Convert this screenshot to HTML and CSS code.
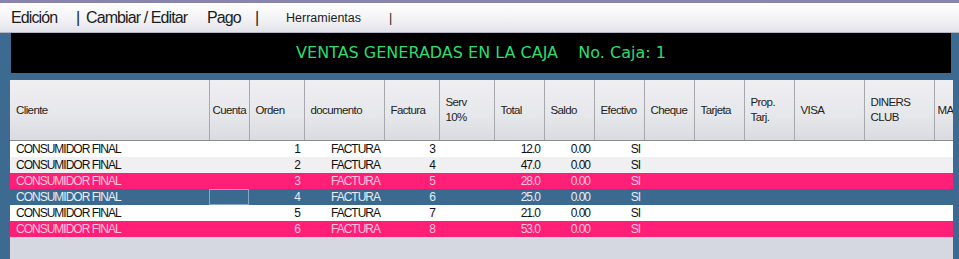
FILE: index.html
```html
<!DOCTYPE html>
<html lang="es">
<head>
    <meta charset="UTF-8">
    <title>Ventas generadas en la caja</title>
    <link rel="stylesheet" href="styles.css">
</head>
<body>
<div class="window">
    <div class="menu">
        <span class="menu-item w-edicion">Edición</span>
        <span class="menu-item w-sep">|</span>
        <span class="menu-item w-cambiar">Cambiar / Editar</span>
        <span class="menu-item w-pago">Pago</span>
        <span class="menu-item w-sep2">|</span>
        <span class="menu-item small w-herr">Herramientas</span>
        <span class="menu-item small">|</span>
    </div>

    <div class="content">
        <div class="banner">VENTAS GENERADAS EN LA CAJA    No. Caja: 1</div>

        <div class="grid">
            <table>
                <colgroup>
                    <col style="width:199px">
                    <col style="width:40px">
                    <col style="width:55px">
                    <col style="width:80px">
                    <col style="width:55px">
                    <col style="width:55px">
                    <col style="width:50px">
                    <col style="width:50px">
                    <col style="width:50px">
                    <col style="width:50px">
                    <col style="width:50px">
                    <col style="width:50px">
                    <col style="width:70px">
                    <col style="width:70px">
                    <col style="width:19px">
                </colgroup>
                <thead>
                <tr>
                    <th>Cliente</th>
                    <th class="tight">Cuenta</th>
                    <th>Orden</th>
                    <th>documento</th>
                    <th>Factura</th>
                    <th>Serv<br>10%</th>
                    <th>Total</th>
                    <th>Saldo</th>
                    <th>Efectivo</th>
                    <th>Cheque</th>
                    <th>Tarjeta</th>
                    <th>Prop.<br>Tarj.</th>
                    <th>VISA</th>
                    <th>DINERS<br>CLUB</th>
                    <th class="last">MA</th>
                </tr>
                </thead>
                <tbody>
                <tr class="row-white">
                    <td class="left">CONSUMIDOR FINAL</td><td></td><td>1</td><td>FACTURA</td><td>3</td><td></td>
                    <td>12.0</td><td>0.00</td><td>SI</td><td></td><td></td><td></td><td></td><td></td><td></td>
                </tr>
                <tr class="row-grey">
                    <td class="left">CONSUMIDOR FINAL</td><td></td><td>2</td><td>FACTURA</td><td>4</td><td></td>
                    <td>47.0</td><td>0.00</td><td>SI</td><td></td><td></td><td></td><td></td><td></td><td></td>
                </tr>
                <tr class="row-pink">
                    <td class="left">CONSUMIDOR FINAL</td><td></td><td>3</td><td>FACTURA</td><td>5</td><td></td>
                    <td>28.0</td><td>0.00</td><td>SI</td><td></td><td></td><td></td><td></td><td></td><td></td>
                </tr>
                <tr class="row-selected">
                    <td class="left">CONSUMIDOR FINAL</td><td class="focus"></td><td>4</td><td>FACTURA</td><td>6</td><td></td>
                    <td>25.0</td><td>0.00</td><td>SI</td><td></td><td></td><td></td><td></td><td></td><td></td>
                </tr>
                <tr class="row-white">
                    <td class="left">CONSUMIDOR FINAL</td><td></td><td>5</td><td>FACTURA</td><td>7</td><td></td>
                    <td>21.0</td><td>0.00</td><td>SI</td><td></td><td></td><td></td><td></td><td></td><td></td>
                </tr>
                <tr class="row-pink">
                    <td class="left">CONSUMIDOR FINAL</td><td></td><td>6</td><td>FACTURA</td><td>8</td><td></td>
                    <td>53.0</td><td>0.00</td><td>SI</td><td></td><td></td><td></td><td></td><td></td><td></td>
                </tr>
                </tbody>
            </table>
        </div>
    </div>
</div>
</body>
</html>
```

FILE: styles.css
```css
html,
body {
    margin: 0;
    padding: 0;
}

body {
    width: 959px;
    height: 259px;
    overflow: hidden;

    font-family: "Liberation Sans", Arial, sans-serif;

    background-color: #3c6a91;
}

.window {
    height: 259px;

    border-top: 3px solid #8886aa;
}

.menu {
    display: flex;
    align-items: center;

    height: 29px;
    padding-left: 11px;

    font-size: 16px;
    color: #1c1c1c;

    border-bottom: 1px solid #b4b6c4;
    background: linear-gradient(#ffffff, #f3f3f6 55%, #e2e3ea);
}

.menu-item {
    white-space: nowrap;
    letter-spacing: -0.9px;
}

.menu-item.small {
    font-size: 12.5px;
    letter-spacing: 0;
}

.w-edicion { width: 65px; }
.w-sep { width: 10px; }
.w-cambiar { width: 121px; }
.w-pago { width: 48px; }
.w-sep2 { width: 31px; }
.w-herr { width: 103px; }

.content {
    padding: 0 6px 0 10px;
}

.banner {
    height: 40px;
    margin-left: 1px;
    margin-right: 2px;

    font-family: "Comic Sans MS", "DejaVu Sans", sans-serif;
    font-size: 16px;
    line-height: 40px;
    text-align: center;
    white-space: pre;
    color: #2bdc70;

    background-color: #000;
}

.grid {
    width: 943px;
    height: 179px;
    margin-top: 7px;
    overflow: hidden;

    background-color: #d5d8e0;
}

table {
    width: 943px;

    table-layout: fixed;
    border-collapse: collapse;

    font-size: 12px;
    letter-spacing: -1px;
}

th {
    height: 60px;
    padding: 0 6px;

    font-weight: normal;
    font-size: 11.5px;
    line-height: 15px;
    letter-spacing: -0.6px;
    text-align: left;
    vertical-align: middle;
    white-space: nowrap;
    overflow: hidden;
    color: #222;

    border-right: 1px solid #a7a8ae;
    border-bottom: 1px solid #8b8c92;
    background: linear-gradient(#efeff2, #e6e7ea 60%, #dadbe1);
}

th.tight {
    padding-left: 3px;
}

th.last {
    padding: 0 0 0 3px;

    border-right: none;
}

td {
    height: 16px;
    padding: 0 4px 0 0;

    line-height: 16px;
    text-align: right;
    white-space: nowrap;
    overflow: hidden;
}

td.left {
    padding-left: 6px;

    text-align: left;
}

.row-white {
    color: #111;
    background-color: #fff;
}

.row-grey {
    color: #111;
    background-color: #f0f0f2;
}

.row-pink {
    color: #ffc4dc;
    background-color: #ff1f76;
}

.row-selected {
    color: #e8eef4;
    background-color: #3b6a90;
}

td.focus {
    box-shadow: inset 0 0 0 1px #86a6c4;
}
```
